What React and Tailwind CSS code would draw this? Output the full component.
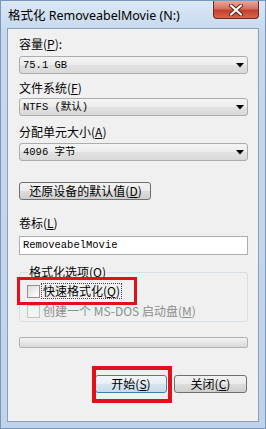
const CJK = { fontFamily: '"Noto Sans CJK SC", "Noto Sans", sans-serif' };
const MONO = { fontFamily: '"Liberation Mono", "Noto Sans CJK SC", monospace' };

function Key({ k }) {
  return (
    <span>
      (<span className="underline">{k}</span>)
    </span>
  );
}

function Label({ text, k, colon, className = '' }) {
  return (
    <div className={`h-[14px] text-[12px] leading-[14px] text-black ${className}`} style={CJK}>
      {text}
      <Key k={k} />
      {colon ? ':' : ''}
    </div>
  );
}

function Combo({ value, className = '' }) {
  return (
    <div
      className={`flex h-[18px] items-center justify-between rounded-[3px] border border-[#acacac] bg-[linear-gradient(#f4f4f4,#ececec_50%,#e2e2e2_50%,#d9d9d9)] pl-[3px] pr-[3px] ${className}`}
    >
      <span className="text-[10.5px] leading-none text-black" style={MONO}>
        {value}
      </span>
      <svg width="8" height="5" viewBox="0 0 8 5">
        <path d="M0 0h8L4 4.5z" fill="#000" />
      </svg>
    </div>
  );
}

function Button({ children, primary, className = '' }) {
  return (
    <div
      className={`flex h-[18px] items-center justify-center rounded-[3px] border text-[12px] leading-none text-black ${
        primary
          ? 'border-[#3c7fb1] bg-[linear-gradient(#f2f6fa,#e6eef5_50%,#d6e4ef_50%,#c9dbe9)]'
          : 'border-[#707070] bg-[linear-gradient(#f2f2f2,#ebebeb_50%,#dddddd_50%,#cfcfcf)]'
      } ${className}`}
      style={CJK}
    >
      {children}
    </div>
  );
}

function Check({ disabled }) {
  return (
    <div
      className={`h-[13px] w-[13px] border ${
        disabled ? 'border-[#c5c5c5] bg-[#f4f4f4]' : 'border-[#8e8f8f] bg-[linear-gradient(135deg,#dcdcdc,#ffffff)]'
      }`}
    />
  );
}

export default function App() {
  return (
    <div className="relative h-[429px] w-[266px] overflow-hidden border border-[#7a96b8] bg-[linear-gradient(#dbe7f5,#c6d9ee_30px,#bfd3ea)]">
      {/* title bar */}
      <div className="flex h-[27px] items-start justify-between">
        <div className="mt-[6px] pl-[7px] text-[12.5px] leading-[16px] text-black" style={{ fontFamily: '"Noto Sans", "Noto Sans CJK SC", sans-serif' }}>
          <span style={CJK}>格式化</span> RemoveabelMovie (N:)
        </div>
        <div className="mr-[6px] flex h-[18px] w-[46px] items-center justify-center rounded-b-[4px] border border-t-0 border-[#6b2a22] bg-[linear-gradient(#e9a99c,#d4705f_45%,#c2412c_55%,#d9644b)]">
          <svg width="14" height="12" viewBox="0 0 14 12">
            <path d="M2 1.5l10 9M12 1.5l-10 9" stroke="#5a2118" strokeWidth="4" strokeLinecap="round" />
            <path d="M2 1.5l10 9M12 1.5l-10 9" stroke="#ffffff" strokeWidth="2.2" strokeLinecap="round" />
          </svg>
        </div>
      </div>

      {/* client area */}
      <div className="mx-[6px] flex h-[394px] flex-col border border-[#8b9fb8] bg-[#f0f0f0] pl-[11px] pr-[10px] pt-[8px]">
        <Label text="容量" k="P" colon />
        <Combo value="75.1 GB" className="mt-[5px]" />
        <Label text="文件系统" k="F" className="mt-[7px]" />
        <Combo value="NTFS (默认)" className="mt-[3px]" />
        <Label text="分配单元大小" k="A" className="mt-[9px]" />
        <Combo value="4096 字节" className="mt-[4px]" />
        <Button className="mt-[21px] w-[132px] pl-[1px]">
          还原设备的默认值<Key k="D" />
        </Button>
        <Label text="卷标" k="L" className="mt-[16px]" />
        <div className="mt-[6px] flex h-[19px] items-center border border-[#abadb3] bg-white pl-[3px]">
          <span className="text-[10.5px] leading-none text-black" style={MONO}>
            RemoveabelMovie
          </span>
        </div>

        {/* group box */}
        <div className="relative mt-[17px] flex h-[50px] flex-col rounded-[3px] border border-[#d5dfe5] pl-[7px] pt-[11px]">
          <div className="absolute left-[8px] top-[-8px] bg-[#f0f0f0] px-[1px] text-[12px] leading-[14px] text-black" style={CJK}>
            格式化选项<Key k="O" />
          </div>
          <div className="flex h-[14px] items-center gap-[1px]">
            <Check />
            <span className="border border-dotted border-[#444] px-[1px] text-[12px] leading-[14px] text-black" style={CJK}>
              快速格式化<Key k="Q" />
            </span>
          </div>
          <div className="mt-[6px] flex h-[14px] items-center gap-[2px]">
            <Check disabled />
            <span className="px-[1px] text-[12px] leading-[14px] text-[#8d8d8d]" style={CJK}>
              创建一个 MS-DOS 启动盘<Key k="M" />
            </span>
          </div>
        </div>

        {/* progress bar */}
        <div className="mt-[15px] h-[11px] rounded-[2px] border border-[#b2b2b2] bg-[linear-gradient(#f3f3f3,#e6e6e6_50%,#d8d8d8)]" />

        <div className="mt-[27px] flex justify-end gap-[7px] pr-[1px]">
          <Button primary className="w-[72px]">
            开始<Key k="S" />
          </Button>
          <Button className="w-[73px]">
            关闭<Key k="C" />
          </Button>
        </div>
      </div>

      {/* red annotation boxes */}
      <div className="absolute left-[16px] top-[276px] h-[28px] w-[120px] border-[3px] border-[#e3101a]" />
      <div className="absolute left-[91px] top-[365px] h-[37px] w-[80px] border-[4px] border-[#e3101a]" />
    </div>
  );
}
